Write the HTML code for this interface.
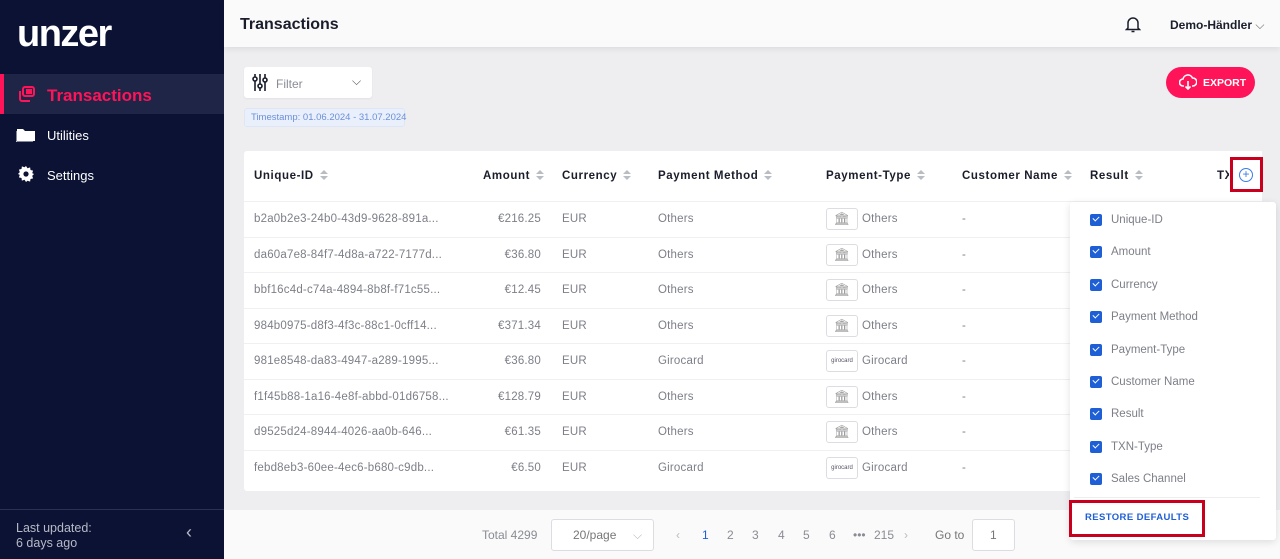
<!DOCTYPE html>
<html><head><meta charset="utf-8"><style>
*{box-sizing:border-box;margin:0;padding:0}
body{width:1280px;height:559px;overflow:hidden;font-family:"Liberation Sans",sans-serif;background:#eeeef1;position:relative}
.a{position:absolute;white-space:nowrap}
.sb{left:0;top:0;width:224px;height:559px;background:#0b1233}
.th{font-size:11.5px;font-weight:bold;color:#1a1d2b;letter-spacing:.6px;top:169px}
.srt{display:inline-block;vertical-align:middle;margin-left:6px;width:8px;height:11px;position:relative}
.srt:before{content:"";position:absolute;left:0;top:0;border:4px solid transparent;border-bottom:4px solid #b8bcc4;border-top:0}
.srt:after{content:"";position:absolute;left:0;top:6px;border:4px solid transparent;border-top:4px solid #b8bcc4;border-bottom:0}
.td{font-size:11.5px;color:#7d7f88;letter-spacing:.2px}
.ic{width:32px;height:22px;border:1px solid #dcdde2;border-radius:3px;background:#fff}
.cb{width:12px;height:12px;background:#1f5fd6;border-radius:2px}
.cb:after{content:"";position:absolute;left:3px;top:2px;width:5px;height:3px;border-left:1.5px solid #fff;border-bottom:1.5px solid #fff;transform:rotate(-45deg)}
.ci{font-size:11.5px;color:#7d7f88}
.pg{font-size:12px;color:#8a8c94;top:528px}
</style></head><body>
<div class="a sb"></div>
<div class="a" style="left:17px;top:13px;font-size:38px;font-weight:bold;color:#fff;letter-spacing:-1.5px">unzer</div>
<div class="a" style="left:0;top:74px;width:224px;height:40px;background:#1e2547"></div>
<div class="a" style="left:0;top:74px;width:4px;height:40px;background:#ff1459"></div>
<svg class="a" style="left:17px;top:86px" width="18" height="16" viewBox="0 0 18 16" fill="none" stroke="#ff1459" stroke-width="2"><rect x="6" y="1" width="11" height="9" rx="2"/><path d="M3 5v8a2 2 0 0 0 2 2h8"/><rect x="10" y="4" width="4" height="3" fill="#ff1459"/></svg>
<div class="a" style="left:47px;top:86px;font-size:17px;font-weight:bold;color:#ff1459">Transactions</div>
<svg class="a" style="left:16px;top:126px" width="20" height="16" viewBox="0 0 20 16"><path d="M1 3h6l2 2h10v10H1z" fill="#fff"/><path d="M0 5v11h17" stroke="#fff" fill="none"/></svg>
<div class="a" style="left:47px;top:128px;font-size:13px;color:#fff">Utilities</div>
<svg class="a" style="left:18px;top:166px" width="16" height="16" viewBox="0 0 16 16"><path d="M8 0l1.5 2.2 2.6-.8.4 2.6 2.6.6-.9 2.5L16 8l-1.8 1.9.9 2.5-2.6.6-.4 2.6-2.6-.8L8 16l-1.5-2.2-2.6.8-.4-2.6-2.6-.6.9-2.5L0 8l1.8-1.9-.9-2.5 2.6-.6.4-2.6 2.6.8z" fill="#fff"/><circle cx="8" cy="8" r="2.6" fill="#0b1233"/></svg>
<div class="a" style="left:47px;top:168px;font-size:13px;color:#fff">Settings</div>
<div class="a" style="left:0;top:509px;width:224px;height:1px;background:#2a3154"></div>
<div class="a" style="left:16px;top:521px;font-size:12.5px;color:#b7bac6;line-height:15px;white-space:normal">Last updated:<br>6 days ago</div>
<div class="a" style="left:186px;top:522px;font-size:18px;color:#b7bac6">‹</div>

<div class="a" style="left:224px;top:0;width:1056px;height:47px;background:#fafafa;box-shadow:0 2px 6px rgba(0,0,0,.08)"></div>
<div class="a" style="left:240px;top:16px;font-size:16px;font-weight:bold;color:#1a1d2b">Transactions</div>
<svg class="a" style="left:1125px;top:16px" width="16" height="17" viewBox="0 0 16 17" fill="none" stroke="#1a1d2b" stroke-width="1.5"><path d="M3 12V7a5 5 0 0 1 10 0v5l1.5 1.5h-13z"/><path d="M6.5 15.5h3"/></svg>
<div class="a" style="left:1170px;top:18px;font-size:12px;font-weight:bold;color:#1a1d2b">Demo-Händler <span style="font-weight:normal;color:#666">⌵</span></div>

<div class="a" style="left:244px;top:67px;width:128px;height:31px;background:#fff;border-radius:3px;box-shadow:0 1px 2px rgba(0,0,0,.06)"></div>
<svg class="a" style="left:252px;top:73px" width="16" height="19" viewBox="0 0 16 19" stroke="#1a1d2b" stroke-width="1.6" fill="#fff"><path d="M3 1v17M8 1v17M13 1v17"/><circle cx="3" cy="6" r="2"/><circle cx="8" cy="13" r="2"/><circle cx="13" cy="7" r="2"/></svg>
<div class="a" style="left:276px;top:77px;font-size:12px;color:#8a8c94">Filter</div>
<div class="a" style="left:352px;top:74px;font-size:12px;color:#555">⌵</div>
<div class="a" style="left:244px;top:108px;width:161px;height:19px;background:#e9f0fc;border:1px solid #dde6f7;border-radius:3px"></div>
<div class="a" style="left:251px;top:112px;font-size:9.5px;color:#6b8fd8">Timestamp: 01.06.2024 - 31.07.2024</div>
<div class="a" style="left:1166px;top:67px;width:89px;height:31px;background:#ff1459;border-radius:16px"></div>
<svg class="a" style="left:1179px;top:74px" width="18" height="16" viewBox="0 0 18 16" fill="none" stroke="#fff" stroke-width="1.6"><path d="M5 12H4a3.5 3.5 0 0 1 0-7 5 5 0 0 1 9.5-1A3.5 3.5 0 0 1 14 12h-1"/><path d="M9 7v8M6.5 12.5 9 15l2.5-2.5"/></svg>
<div class="a" style="left:1203px;top:77px;font-size:10.5px;font-weight:bold;color:#fff">EXPORT</div>

<div class="a" style="left:244px;top:151px;width:1018px;height:340px;background:#fff;border-radius:3px"></div>
<div class="a th" style="left:254px;top:170px">Unique-ID<span class="srt"></span></div>
<div class="a th" style="left:483px;top:170px">Amount<span class="srt"></span></div>
<div class="a th" style="left:562px;top:170px">Currency<span class="srt"></span></div>
<div class="a th" style="left:658px;top:170px">Payment Method<span class="srt"></span></div>
<div class="a th" style="left:826px;top:170px">Payment-Type<span class="srt"></span></div>
<div class="a th" style="left:962px;top:170px">Customer Name<span class="srt"></span></div>
<div class="a th" style="left:1090px;top:170px">Result<span class="srt"></span></div>
<div class="a th" style="left:1217px;top:170px">TX</div>
<div class="a" style="left:1229px;top:151px;width:33px;height:50px;background:#fff"></div>
<div class="a" style="left:1239px;top:168px;width:14px;height:14px;border:1.3px solid #3b7be8;border-radius:50%;color:#3b7be8;font-size:12px;line-height:11px;text-align:center">+</div>
<div class="a" style="left:1230px;top:157px;width:33px;height:35px;border:3px solid #c8001e"></div>

<div id="rows"></div>
<script>
var d=[["b2a0b2e3-24b0-43d9-9628-891a...","€216.25","Others",0],["da60a7e8-84f7-4d8a-a722-7177d...","€36.80","Others",0],["bbf16c4d-c74a-4894-8b8f-f71c55...","€12.45","Others",0],["984b0975-d8f3-4f3c-88c1-0cff14...","€371.34","Others",0],["981e8548-da83-4947-a289-1995...","€36.80","Girocard",1],["f1f45b88-1a16-4e8f-abbd-01d6758...","€128.79","Others",0],["d9525d24-8944-4026-aa0b-646...","€61.35","Others",0],["febd8eb3-60ee-4ec6-b680-c9db...","€6.50","Girocard",1]];
var h="";
d.forEach(function(r,i){var y=201+i*35.5;var c=y+18;
h+='<div class="a" style="left:244px;top:'+(y)+'px;width:1018px;height:1px;background:#f0f0f2"></div>';
h+='<div class="a td" style="left:254px;top:'+(c-6)+'px">'+r[0]+'</div>';
h+='<div class="a td" style="left:441px;width:100px;text-align:right;top:'+(c-6)+'px">'+r[1]+'</div>';
h+='<div class="a td" style="left:562px;top:'+(c-6)+'px">EUR</div>';
h+='<div class="a td" style="left:658px;top:'+(c-6)+'px">'+r[2]+'</div>';
h+='<div class="a ic" style="left:826px;top:'+(c-11)+'px;text-align:center;font-size:'+(r[3]?'6px;line-height:20px;color:#556':'13px;line-height:20px;color:#999')+'">'+(r[3]?'girocard':'🏛')+'</div>';
h+='<div class="a td" style="left:862px;top:'+(c-6)+'px">'+r[2]+'</div>';
h+='<div class="a td" style="left:962px;top:'+(c-6)+'px">-</div>';});
document.getElementById('rows').innerHTML=h;
</script>

<div class="a" style="left:224px;top:510px;width:1056px;height:49px;background:#fafafa"></div>
<div class="a pg" style="left:482px">Total 4299</div>
<div class="a" style="left:551px;top:519px;width:103px;height:32px;border:1px solid #dcdde2;border-radius:3px;background:#fff"></div>
<div class="a pg" style="left:573px;color:#777">20/page</div>
<div class="a pg" style="left:633px;color:#bbb">⌵</div>
<div class="a pg" style="left:676px;color:#bbb">‹</div>
<div class="a pg" style="left:702px;color:#1f5fd6">1</div>
<div class="a pg" style="left:727px">2</div>
<div class="a pg" style="left:752px">3</div>
<div class="a pg" style="left:778px">4</div>
<div class="a pg" style="left:803px">5</div>
<div class="a pg" style="left:829px">6</div>
<div class="a pg" style="left:853px">•••</div>
<div class="a pg" style="left:874px">215</div>
<div class="a pg" style="left:904px;color:#bbb">›</div>
<div class="a pg" style="left:935px;color:#777">Go to</div>
<div class="a" style="left:972px;top:519px;width:43px;height:32px;border:1px solid #dcdde2;border-radius:3px;background:#fff"></div>
<div class="a pg" style="left:990px;color:#777">1</div>

<div class="a" style="left:1070px;top:202px;width:206px;height:338px;background:#fff;border-radius:3px;box-shadow:0 2px 8px rgba(0,0,0,.12)"></div>
<div id="menu"></div>
<script>
var m=["Unique-ID","Amount","Currency","Payment Method","Payment-Type","Customer Name","Result","TXN-Type","Sales Channel"];var s="";
m.forEach(function(t,i){var y=220+i*32.4;s+='<div class="a cb" style="left:1090px;top:'+(y-6)+'px"></div><div class="a ci" style="left:1111px;top:'+(y-6)+'px">'+t+'</div>';});
document.getElementById('menu').innerHTML=s;
</script>
<div class="a" style="left:1074px;top:497px;width:186px;height:1px;background:#eee"></div>
<div class="a" style="left:1085px;top:512px;font-size:9.5px;font-weight:bold;color:#1f5fd6;letter-spacing:.4px">RESTORE DEFAULTS</div>
<div class="a" style="left:1069px;top:500px;width:136px;height:37px;border:3px solid #c8001e"></div>
</body></html>
